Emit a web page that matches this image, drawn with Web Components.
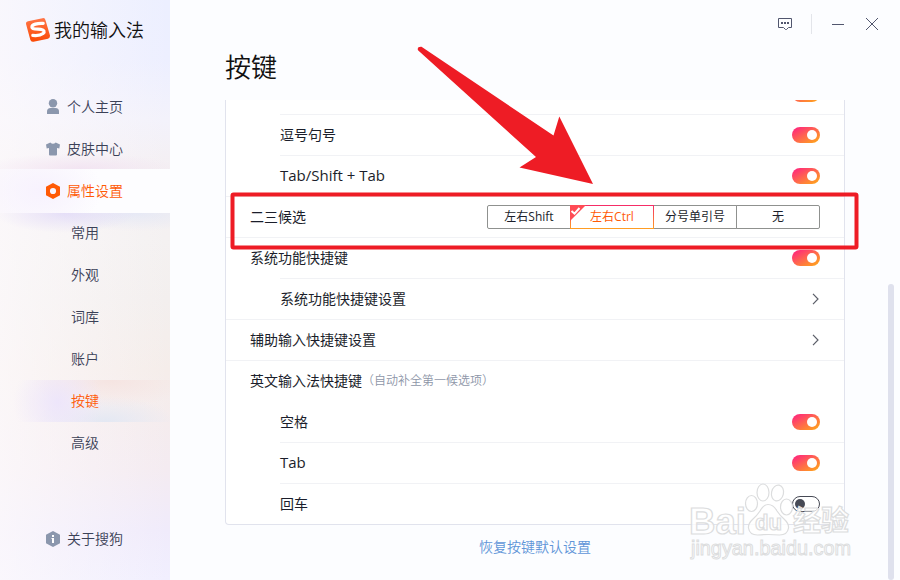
<!DOCTYPE html>
<html lang="zh-CN">
<head>
<meta charset="utf-8">
<title>按键</title>
<style>
    body {
        margin: 0;
        width: 900px;
        height: 580px;
        overflow: hidden;
        background: #fcfdff;
        color: #1b1e2b;
        font: 14px/20px "Open Sans", "Noto Sans CJK SC", sans-serif;
    }
    .latin { font-size: 15px; }
</style>
</head>
<body>
<settings-window>
    <side-bar slot="side">
        <nav-item icon="user">个人主页</nav-item>
        <nav-item icon="shirt">皮肤中心</nav-item>
        <nav-item icon="nut" active>属性设置</nav-item>
        <nav-item sub>常用</nav-item>
        <nav-item sub>外观</nav-item>
        <nav-item sub>词库</nav-item>
        <nav-item sub>账户</nav-item>
        <nav-item sub active>按键</nav-item>
        <nav-item sub>高级</nav-item>
        <nav-item slot="foot" icon="info">关于搜狗</nav-item>
    </side-bar>
    <window-controls slot="controls"></window-controls>
    <span slot="title">按键</span>
    <setting-row sub><toggle-switch slot="control" on></toggle-switch></setting-row>
    <setting-row sub>逗号句号<toggle-switch slot="control" on></toggle-switch></setting-row>
    <setting-row sub><span class="latin">Tab/Shift + Tab</span><toggle-switch slot="control" on></toggle-switch></setting-row>
    <setting-row>二三候选
        <segment-group slot="control">
            <segment-item>左右Shift</segment-item>
            <segment-item selected>左右Ctrl</segment-item>
            <segment-item>分号单引号</segment-item>
            <segment-item>无</segment-item>
        </segment-group>
    </setting-row>
    <setting-row>系统功能快捷键<toggle-switch slot="control" on></toggle-switch></setting-row>
    <setting-row sub>系统功能快捷键设置<chevron-icon slot="control"></chevron-icon></setting-row>
    <setting-row>辅助输入快捷键设置<chevron-icon slot="control"></chevron-icon></setting-row>
    <setting-row>英文输入法快捷键<span slot="hint">（自动补全第一候选项）</span></setting-row>
    <setting-row sub plain>空格<toggle-switch slot="control" on></toggle-switch></setting-row>
    <setting-row sub><span class="latin">Tab</span><toggle-switch slot="control" on></toggle-switch></setting-row>
    <setting-row sub>回车<toggle-switch slot="control"></toggle-switch></setting-row>
    <span slot="reset">恢复按键默认设置</span>
</settings-window>
<arrow-note></arrow-note>
<site-mark></site-mark>

<script>
// Shared helper: defines an element whose shadow root is cloned from a template.
function define(name, html) {
    const template = document.createElement('template');
    template.innerHTML = html;
    customElements.define(name, class extends HTMLElement {
        constructor() {
            super();
            const shadow = this.attachShadow({ mode: 'open' });
            shadow.append(template.content.cloneNode(true));
        }
    });
}

define('settings-window', `
    <style>
        :host {
            display: grid;
            grid-template-columns: 170px 1fr;
            height: 580px;
        }
        main {
            display: grid;
            grid-template-rows: 48px 52px 425px 1fr;
            grid-template-columns: 55px 620px 1fr;
        }
        header {
            grid-column: 1 / 4;
            display: flex;
            justify-content: flex-end;
        }
        h1 {
            grid-area: 2 / 2;
            margin: 0;
            font-size: 26px;
            font-weight: 350;
            line-height: 38px;
            color: #111;
        }
        .panel {
            grid-area: 3 / 2;
            box-sizing: border-box;
            display: flex;
            flex-direction: column;
            justify-content: flex-end;
            overflow: hidden;
            background: #fff;
            border: 1px solid #e1e3ed;
            border-top: 0;
            border-radius: 0 0 4px 4px;
        }
        footer {
            grid-area: 4 / 2;
            padding-top: 12px;
            text-align: center;
            font-weight: 350;
            color: #5f95d8;
        }
        .scroll {
            grid-area: 3 / 3 / 5 / 4;
            justify-self: end;
            width: 6px;
            height: 296px;
            margin: 184px 6px 0 0;
            border-radius: 3px;
            background: #dfe1ed;
        }
    </style>
    <slot name="side"></slot>
    <main>
        <header><slot name="controls"></slot></header>
        <h1><slot name="title"></slot></h1>
        <section class="panel"><slot></slot></section>
        <div class="scroll"></div>
        <footer><slot name="reset"></slot></footer>
    </main>
`);

define('side-bar', `
    <style>
        :host {
            box-sizing: border-box;
            display: flex;
            flex-direction: column;
            height: 580px;
            padding-bottom: 20px;
            font-weight: 350;
            background:
                radial-gradient(ellipse 70px 20px at 65px 213px, rgba(222,214,248,.7), transparent),
                radial-gradient(ellipse 85px 18px at 135px 213px, rgba(224,229,246,.7), transparent),
                radial-gradient(ellipse 100px 16px at 80px 169px, rgba(240,222,240,.7), transparent),
                linear-gradient(90deg, rgba(253,250,252,.75), rgba(253,250,252,0)),
                linear-gradient(180deg, #ecefff 0, #edefff 60px, #f3f2fb 120px, #f4eff2 170px,
                    #f4f1f1 240px, #f3efee 300px, #f5edea 370px, #f4ebf1 470px, #f0ebfb 530px, #f1effe 580px);
        }
        .brand {
            display: flex;
            align-items: center;
            gap: 3px;
            height: 60px;
            padding-left: 25px;
            margin-bottom: 26px;
            font-size: 18px;
            color: #111;
        }
        .foot { margin-top: auto; }
    </style>
    <div class="brand">
        <svg width="26" height="26" viewBox="0 0 26 26">
            <defs><linearGradient id="g" x2="0" y2="1"><stop stop-color="#ff7547"/><stop offset="1" stop-color="#fa4a06"/></linearGradient></defs>
            <path fill="url(#g)" d="M3 4.2 17.5 1.2q2.500-.5 3 2L25 18.500q.3 2.300-2 3.300L8.500 24.700q-2.600.4-3.200-2L1.100 7.300q-.5-2.500 1.900-3.100z"/>
            <path fill="none" stroke="#fff" stroke-width="3.200" stroke-linecap="round" d="M18.200 6.400C12.500 6 6.800 7.500 6.900 10.100c.1 2.700 5.800 1.800 8.900 2.200 3.500.5 4.200 2.500 2.200 4.200-2.100 1.700-6.300 2.300-10.200 1.900"/>
        </svg>
        <span>我的输入法</span>
    </div>
    <slot></slot>
    <div class="foot"><slot name="foot"></slot></div>
`);

const icons = {
    user: '<circle cx="7" cy="4.200" r="4.200"/><path d="M1 15v-2.500q0-3.500 3.500-3.500h5q3.500 0 3.500 3.500V15z"/>',
    shirt: '<path d="M0 3.500 4.300 1.600Q7 4 9.700 1.600L14 3.500 13.300 7.500 11 7v6.500q0 1-1 1H4q-1 0-1-1V7l-2.300.5z"/>',
    nut: '<path fill-rule="evenodd" d="M7 0 14 3.800v8.400L7 16 0 12.200V3.800zM7 4.900a3.100 3.100 0 1 0 0 6.200 3.100 3.100 0 0 0 0-6.200z"/>',
    info: '<path d="M7 0 14 3.800v8.400L7 16 0 12.200V3.800z"/><path fill="#fff" d="M6 4h2v2H6zM5.500 7H8v5H6V8h-.5z"/>'
};

class NavItem extends HTMLElement {
    constructor() {
        super();
        const icon = icons[this.getAttribute('icon')];
        this.attachShadow({ mode: 'open' }).innerHTML = `
            <style>
                :host {
                    display: flex;
                    align-items: center;
                    gap: 7px;
                    height: 42px;
                    padding-left: 46px;
                    color: #3b4157;
                }
                :host([sub]) { padding-left: 71px; }
                :host([active]) { color: #ff5a05; }
                :host([active]:not([sub])) {
                    height: 44px;
                    margin: -1px 0;
                    background: radial-gradient(ellipse 60px 40px at 42px 22px, #f7f2fe, transparent),
                        linear-gradient(90deg, #fbf8fc, #fdfdff 100px);
                }
                :host([sub][active]) {
                    background:
                        radial-gradient(ellipse 45px 45px at 58px 22px, rgba(236,228,251,.9), transparent),
                        radial-gradient(ellipse 70px 26px at 105px 42px, rgba(225,231,243,.9), transparent),
                        radial-gradient(ellipse 80px 28px at 110px 0, rgba(245,225,222,.8), transparent);
                }
                svg { fill: #8b97ad; }
                :host([active]) svg { fill: #ff5a05; }
            </style>
            ${icon ? `<svg width="14" height="16" viewBox="0 0 14 16">${icon}</svg>` : ''}
            <span><slot></slot></span>
        `;
    }
}
customElements.define('nav-item', NavItem);

define('window-controls', `
    <style>
        :host { display: block; height: 48px; }
    </style>
    <svg width="130" height="48" viewBox="770 0 130 48" fill="none" stroke="#51566e">
        <path d="M778.500 18.500h13v9h-3l-2 2h-1l-2-2h-5z"/>
        <path stroke-width="2" stroke-dasharray="2 1" d="M781 23h8"/>
        <path stroke="#e3e5ea" d="M811.500 14v20"/>
        <path d="M832 24.500h12M866 18l12 12M878 18l-12 12"/>
    </svg>
`);

// The separator is drawn along the top edge; sub rows start it at their text.
define('setting-row', `
    <style>
        :host {
            flex: none;
            box-sizing: border-box;
            display: flex;
            align-items: center;
            height: 41px;
            padding: 0 24px;
            background: linear-gradient(#f1f2f5, #f1f2f5) 0 0 / 100% 1px no-repeat;
        }
        :host([sub]) { padding-left: 54px; background-position: 54px 0; }
        :host([plain]) { background: none; }
        .hint { font-size: 12px; font-weight: 350; color: #8e96a8; }
        .control { margin-left: auto; display: flex; }
    </style>
    <span><slot></slot></span>
    <span class="hint"><slot name="hint"></slot></span>
    <span class="control"><slot name="control"></slot></span>
`);

define('toggle-switch', `
    <style>
        :host {
            box-sizing: border-box;
            display: flex;
            align-items: center;
            width: 28px;
            height: 16px;
            padding: 0 2px;
            border: 1px solid #474a55;
            border-radius: 8px;
            background: #fff;
        }
        :host([on]) {
            justify-content: flex-end;
            border: 0;
            padding: 0 3px;
            background: linear-gradient(150deg, #ff2b79 10%, #ff6450 48%, #ff9f20 90%);
        }
        i { width: 10px; height: 10px; border-radius: 50%; background: #474a55; }
        :host([on]) i { background: #fff; }
    </style>
    <i></i>
`);

define('chevron-icon', `
    <style>
        :host { display: block; height: 12px; }
        svg { display: block; }
    </style>
    <svg width="8" height="12" fill="none" stroke="#5b5e68" stroke-width="1.200"><path d="M1 .8 6 6 1 11.200"/></svg>
`);

define('segment-group', `
    <style>
        :host {
            display: grid;
            grid-template-columns: 83px 83px 83px 84px;
            width: 333px;
            height: 24px;
            font-size: 12px;
            line-height: 22px;
        }
        ::slotted(*) { margin-right: -1px; }
        ::slotted(:last-child) { margin-right: 0; }
    </style>
    <slot></slot>
`);

define('segment-item', `
    <style>
        :host {
            position: relative;
            display: block;
            box-sizing: border-box;
            border: 1px solid #8f918f;
            text-align: center;
            background: #fff;
        }
        :host(:first-child) { border-radius: 2px 0 0 2px; }
        :host(:last-child) { border-radius: 0 2px 2px 0; }
        :host([selected]) {
            z-index: 1;
            color: #ff5a05;
            border-color: transparent;
            background: linear-gradient(#fff, #fff) padding-box, linear-gradient(#f52b68, #ff9f22) border-box;
        }
        svg { display: none; position: absolute; left: -1px; top: -1px; }
        :host([selected]) svg { display: block; }
    </style>
    <slot></slot>
    <svg width="16" height="16"><path fill="#ff4b55" d="M0 0h16L0 16z"/><path fill="none" stroke="#fff" stroke-width="2" d="m1.500 6 3 2.700L9.500 3"/></svg>
`);

define('arrow-note', `
    <style>
        :host { position: absolute; left: 0; top: 0; z-index: 3; }
        svg { display: block; }
    </style>
    <svg width="900" height="260">
        <rect x="232.500" y="194.500" width="624" height="53" rx="1" fill="none" stroke="#ee1c25" stroke-width="4"/>
        <path fill="#ee1c25" d="M421.500 46.800 553.500 135.500 559.300 116.500 593 184 519.500 167.500 536 157 418 50.300Q416.800 46.500 421.500 46.800z"/>
    </svg>
`);

define('site-mark', `
    <style>
        :host { position: absolute; left: 680px; top: 470px; z-index: 2; }
        svg { display: block; }
    </style>
    <svg width="200" height="110" viewBox="680 470 200 110" fill="#fff" fill-opacity=".8" stroke="#dcddde" stroke-width="1.200">
        <ellipse cx="751.500" cy="503.500" rx="6" ry="8"/>
        <ellipse cx="763" cy="492.500" rx="6" ry="8.500"/>
        <ellipse cx="777.500" cy="493" rx="6" ry="8" transform="rotate(12 777.500 493)"/>
        <ellipse cx="786.500" cy="507" rx="6" ry="8"/>
        <path d="M768 504.500q5.500 0 9 6.500 3 4.500 7 8 5 4.500 4.500 9-1 7-9 7-6-.500-11-.500t-11 .500q-8 0-9-7-.5-4.500 4.500-9 4-3.500 7-8 3.500-6.500 8-6.500z"/>
        <g font-family="Liberation Sans, sans-serif" font-weight="700">
            <text x="689" y="533.500" font-size="36" textLength="57" lengthAdjust="spacingAndGlyphs">Bai</text>
            <text x="755" y="530" font-size="22" textLength="27" lengthAdjust="spacingAndGlyphs">du</text>
            <text x="793" y="531" font-size="28" font-family="Noto Sans CJK SC, sans-serif" textLength="56" lengthAdjust="spacingAndGlyphs">经验</text>
        </g>
        <text x="691" y="555" font-family="Liberation Sans, sans-serif" font-size="20" stroke-width="1" textLength="160" lengthAdjust="spacingAndGlyphs">jingyan.baidu.com</text>
    </svg>
`);
</script>
</body>
</html>
